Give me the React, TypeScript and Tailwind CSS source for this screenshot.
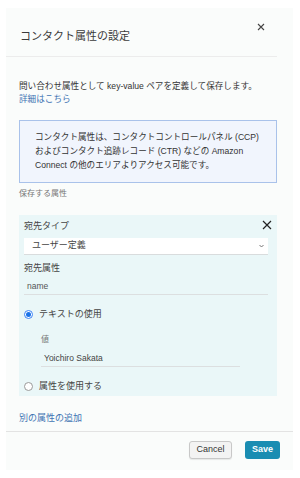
import { useState } from "react";

const font = { fontFamily: '"Liberation Sans", "Noto Sans CJK JP", sans-serif' };

function Radio({ checked }: { checked: boolean }) {
  return (
    <span
      className={`flex h-[9px] w-[9px] items-center justify-center rounded-full border ${
        checked ? "border-[#3b82f6] bg-white" : "border-[#9a9a9a] bg-white"
      }`}
    >
      {checked && <span className="h-[5px] w-[5px] rounded-full bg-[#1a73e8]" />}
    </span>
  );
}

export default function App() {
  const [useText, setUseText] = useState(true);

  return (
    <div className="h-[478px] w-[300px] bg-white pl-[6px] pt-[8px]" style={font}>
      <div className="flex h-[462px] w-[287px] flex-col bg-[#fafcfb]">
        {/* header */}
        <div className="mr-[16px] flex h-[49px] items-start justify-between border-b border-[#ececec] pl-[14px]">
          <h2 className="pt-[21px] text-[11px] leading-[14px] text-[#3a3a3a]">コンタクト属性の設定</h2>
          <button className="mr-[12px] mt-[15px] text-[#444]">
            <svg width="8" height="8" viewBox="0 0 8 8">
              <path d="M1 1L7 7M7 1L1 7" stroke="currentColor" strokeWidth="1.1" />
            </svg>
          </button>
        </div>

        <div className="flex-1 pl-[13px] pr-[16px]">
          <p className="mt-[23px] text-[8.6px] leading-[13px] text-[#333]">
            問い合わせ属性として key-value ペアを定義して保存します。
            <br />
            <a className="text-[#3f74b3]">詳細はこちら</a>
          </p>

          <div className="mt-[14px] h-[63px] border border-[#a9c2ea] bg-[#f1f5fd] pl-[15px] pt-[9px] text-[8.6px] leading-[14px] text-[#333]">
            <p className="whitespace-nowrap">コンタクト属性は、コンタクトコントロールパネル (CCP)</p>
            <p className="whitespace-nowrap">およびコンタクト追跡レコード (CTR) などの Amazon</p>
            <p className="whitespace-nowrap">Connect の他のエリアよりアクセス可能です。</p>
          </div>

          <p className="mt-[6px] text-[8px] leading-[10px] text-[#777]">保存する属性</p>

          <div className="mt-[16px] h-[181px] bg-[#eaf7f8] pl-[5px] pr-[9px]">
            <div className="flex h-[23px] items-center justify-between pt-[1px]">
              <span className="text-[9px] text-[#444]">宛先タイプ</span>
              <svg width="10" height="10" viewBox="0 0 10 10" className="-mr-[4px] -mt-[4px] text-[#222]">
                <path d="M1 1L9 9M9 1L1 9" stroke="currentColor" strokeWidth="1.2" />
              </svg>
            </div>
            <div className="flex h-[17px] items-center justify-between border-b border-[#d9dcdd] bg-white pl-[8px] pr-[4px]">
              <span className="text-[9px] text-[#444]">ユーザー定義</span>
              <svg width="5" height="4" viewBox="0 0 5 4" className="text-[#666]">
                <path d="M0.5 1L2.5 3L4.5 1" fill="none" stroke="currentColor" strokeWidth="0.9" />
              </svg>
            </div>
            <p className="mt-[7px] text-[9px] leading-[12px] text-[#444]">宛先属性</p>
            <div className="mt-[6px] h-[15px] border-b border-[#dcdfe0] pl-[3px] text-[8.5px] leading-[13px] text-[#555]">
              name
            </div>

            <label className="mt-[13px] flex items-center gap-[6px]" onClick={() => setUseText(true)}>
              <Radio checked={useText} />
              <span className="text-[9px] leading-[12px] text-[#444]">テキストの使用</span>
            </label>
            <div className="pl-[17px]">
              <p className="mt-[15px] text-[8px] leading-[10px] text-[#777]">値</p>
              <div className="mt-[7px] h-[15px] w-[199px] border-b border-[#dcdfe0] pl-[3px] text-[8.5px] leading-[13px] text-[#444]">
                Yoichiro Sakata
              </div>
            </div>
            <label className="mt-[13px] flex items-center gap-[6px]" onClick={() => setUseText(false)}>
              <Radio checked={!useText} />
              <span className="text-[9px] leading-[12px] text-[#444]">属性を使用する</span>
            </label>
          </div>

          <a className="mt-[16px] block text-[9px] leading-[12px] text-[#3f74b3]">別の属性の追加</a>
        </div>

        {/* footer */}
        <div className="flex h-[39px] items-start justify-end gap-[13px] border-t border-[#e3e3e3] pr-[13px] pt-[9px]">
          <button className="h-[18px] w-[43px] rounded-[3px] border border-[#c8c8c8] bg-[#f3f3f3] text-[9px] text-[#333] shadow-[0_1px_1px_rgba(0,0,0,0.08)]">
            Cancel
          </button>
          <button className="h-[18px] w-[35px] rounded-[3px] bg-[#1a8db2] text-[9px] font-bold text-white">
            Save
          </button>
        </div>
      </div>
    </div>
  );
}
